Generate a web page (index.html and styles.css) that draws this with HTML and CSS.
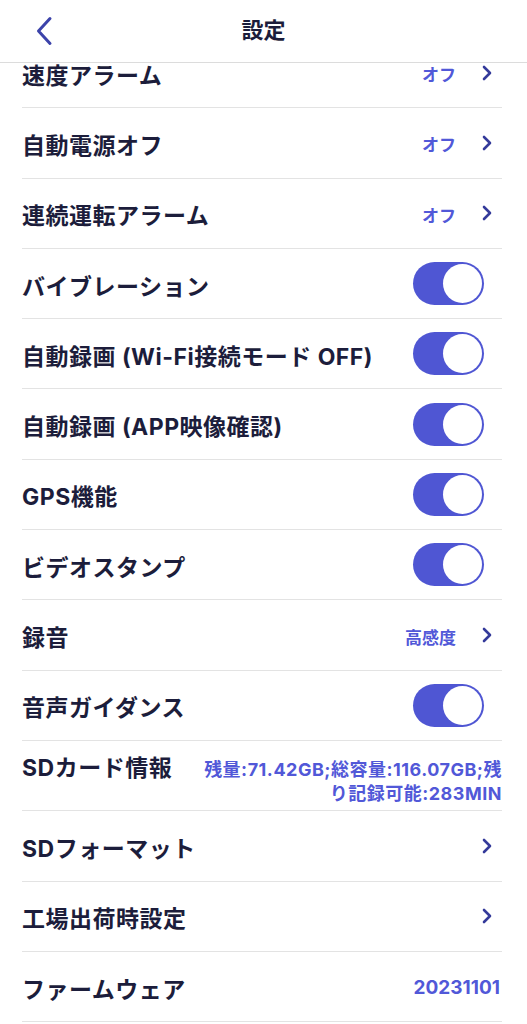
FILE: index.html
```html
<!DOCTYPE html>
<html lang="ja">
<head>
<meta charset="utf-8">
<title>設定</title>
<link rel="stylesheet" href="styles.css">
</head>
<body>
<header class="nav">
  <div class="nav-left">
    <svg class="back" width="18" height="30" viewBox="0 0 18 30"><path d="M15 2.5 L3.5 15 L15 27.5" fill="none" stroke="#3c43aa" stroke-width="3" stroke-linecap="round" stroke-linejoin="round"/></svg>
  </div>
  <div class="nav-title">設定</div>
  <div class="nav-right"></div>
</header>
<main class="content">
  <ul class="list">
    <li class="row"><span class="label">速度アラーム</span><span class="right"><span class="value">オフ</span><svg class="chev" width="10" height="16" viewBox="0 0 10 16"><path d="M2 2 L8 8 L2 14" fill="none" stroke="#343a9a" stroke-width="2.6" stroke-linecap="round" stroke-linejoin="round"/></svg></span></li>
    <li class="row"><span class="label">自動電源オフ</span><span class="right"><span class="value">オフ</span><svg class="chev" width="10" height="16" viewBox="0 0 10 16"><path d="M2 2 L8 8 L2 14" fill="none" stroke="#343a9a" stroke-width="2.6" stroke-linecap="round" stroke-linejoin="round"/></svg></span></li>
    <li class="row"><span class="label">連続運転アラーム</span><span class="right"><span class="value">オフ</span><svg class="chev" width="10" height="16" viewBox="0 0 10 16"><path d="M2 2 L8 8 L2 14" fill="none" stroke="#343a9a" stroke-width="2.6" stroke-linecap="round" stroke-linejoin="round"/></svg></span></li>
    <li class="row"><span class="label">バイブレーション</span><span class="toggle"><span class="knob"></span></span></li>
    <li class="row"><span class="label">自動録画 (Wi-Fi接続モード OFF)</span><span class="toggle"><span class="knob"></span></span></li>
    <li class="row"><span class="label">自動録画 (APP映像確認)</span><span class="toggle"><span class="knob"></span></span></li>
    <li class="row"><span class="label">GPS機能</span><span class="toggle"><span class="knob"></span></span></li>
    <li class="row"><span class="label">ビデオスタンプ</span><span class="toggle"><span class="knob"></span></span></li>
    <li class="row"><span class="label">録音</span><span class="right"><span class="value">高感度</span><svg class="chev" width="10" height="16" viewBox="0 0 10 16"><path d="M2 2 L8 8 L2 14" fill="none" stroke="#343a9a" stroke-width="2.6" stroke-linecap="round" stroke-linejoin="round"/></svg></span></li>
    <li class="row"><span class="label">音声ガイダンス</span><span class="toggle"><span class="knob"></span></span></li>
    <li class="row row-top"><span class="label">SDカード情報</span><span class="value sd">残量:71.42GB;総容量:116.07GB;残<br>り記録可能:283MIN</span></li>
    <li class="row"><span class="label">SDフォーマット</span><span class="right"><svg class="chev" width="10" height="16" viewBox="0 0 10 16"><path d="M2 2 L8 8 L2 14" fill="none" stroke="#343a9a" stroke-width="2.6" stroke-linecap="round" stroke-linejoin="round"/></svg></span></li>
    <li class="row"><span class="label">工場出荷時設定</span><span class="right"><svg class="chev" width="10" height="16" viewBox="0 0 10 16"><path d="M2 2 L8 8 L2 14" fill="none" stroke="#343a9a" stroke-width="2.6" stroke-linecap="round" stroke-linejoin="round"/></svg></span></li>
    <li class="row"><span class="label">ファームウェア</span><span class="value fw">20231101</span></li>
  </ul>
</main>
</body>
</html>
```
FILE: styles.css
```css
html, body {
  margin: 0;
  padding: 0;
  overflow: hidden;
  background: #ffffff;
}
body {
  font-family: "Inter", "Noto Sans CJK JP", sans-serif;
  color: #1c1d3b;
  height: 1024px;
}
.nav {
  height: 62px;
  border-bottom: 1px solid #dcdcdc;
  display: grid;
  grid-template-columns: 1fr auto 1fr;
  align-items: center;
  background: #fff;
}
.nav-left {
  padding-left: 35px;
  display: flex;
  align-items: center;
}
.back { display: block; }
.nav-title {
  font-size: 22px;
  font-weight: 700;
  color: #1c1d3b;
  margin-bottom: 6px;
}
.content {
  height: 961px;
  overflow: hidden;
}
.list {
  list-style: none;
  margin: -25px 25px 0 22px;
  padding: 0;
}
.row {
  box-sizing: border-box;
  height: 70.3px;
  border-bottom: 1px solid #e3e3e3;
  display: flex;
  align-items: center;
  justify-content: space-between;
}
.label {
  font-size: 23px;
  font-weight: 700;
  letter-spacing: 0.5px;
  color: #1c1d3b;
  padding-top: 2px;
  white-space: nowrap;
}
.right {
  display: flex;
  align-items: center;
  gap: 26px;
  padding-right: 10px;
}
.value {
  font-size: 17px;
  font-weight: 700;
  color: #5158d8;
  padding-top: 2px;
}
.chev { display: block; }
.toggle {
  box-sizing: border-box;
  width: 71px;
  height: 43px;
  border-radius: 22px;
  background: #4f56d3;
  margin-right: 18px;
  padding: 2px;
  display: flex;
  justify-content: flex-end;
  align-items: center;
}
.knob {
  width: 39px;
  height: 39px;
  border-radius: 50%;
  background: #fff;
}
.row-top {
  align-items: flex-start;
  padding-top: 12px;
}
.row-top .label {
  line-height: 30px;
  padding-top: 0;
}
.sd {
  font-size: 18px;
  letter-spacing: 0.5px;
  text-align: right;
  line-height: 24px;
  margin-top: 5px;
  padding-top: 0;
}
.fw {
  font-size: 19px;
  padding-right: 2px;
}
```
